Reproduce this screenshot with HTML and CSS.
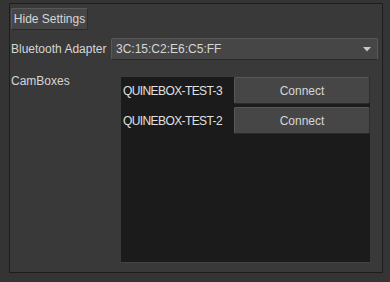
FILE: index.html
```html
<!DOCTYPE html>
<html lang="en">
<head>
    <meta charset="UTF-8">
    <meta name="viewport" content="width=device-width, initial-scale=1.0">
    <title>Settings</title>
    <link rel="stylesheet" href="styles.css">
</head>
<body>
    <div class="panel">
        <button class="btn toggle">Hide Settings</button>

        <div class="row adapter-row">
            <span class="label">Bluetooth Adapter</span>
            <div class="dropdown">
                <span>3C:15:C2:E6:C5:FF</span>
                <svg class="caret" width="8" height="5" viewBox="0 0 8 5">
                    <path d="M0 0 H8 L4 4.5 Z" fill="#c8c8c8"/>
                </svg>
            </div>
        </div>

        <div class="row boxes-row">
            <span class="label boxes-label">CamBoxes</span>
            <div class="box-list">
                <div class="box">
                    <span class="box-name">QUINEBOX-TEST-3</span>
                    <button class="btn connect">Connect</button>
                </div>
                <div class="box">
                    <span class="box-name">QUINEBOX-TEST-2</span>
                    <button class="btn connect">Connect</button>
                </div>
            </div>
        </div>
    </div>
</body>
</html>
```

FILE: styles.css
```css
:root {
    --color-bg: #343434;
    --color-panel: #393939;
    --color-line: #1d1d1d;
    --color-list: #1b1b1b;
    --color-btn: #464646;
    --color-btn-edge: #585858;
    --color-text: #d6d6d6;
}

body {
    margin: 0;
    background-color: var(--color-bg);
    font-family: 'Liberation Sans', Arial, sans-serif;
    font-size: 12px;
    color: var(--color-text);
}

.panel {
    box-sizing: border-box;
    margin: 3px 7px 0 9px;
    height: 270px;
    border: 1px solid var(--color-line);
    background-color: var(--color-panel);
    padding: 4px 0 0 1px;
}

.btn {
    font-family: inherit;
    font-size: 12px;
    color: var(--color-text);
    background-color: var(--color-btn);
    border: 1px solid var(--color-btn-edge);
    border-bottom-color: #2a2a2a;
    border-right-color: #2e2e2e;
    border-radius: 2px;
    cursor: pointer;
}

.toggle {
    display: block;
    width: 77px;
    height: 22px;
    padding: 0;
}

.row {
    display: flex;
}

.adapter-row {
    margin-top: 8px;
    align-items: center;
}

.label {
    width: 100px;
}

.dropdown {
    box-sizing: border-box;
    display: flex;
    align-items: center;
    justify-content: space-between;
    width: 267px;
    height: 22px;
    padding: 0 6px 0 4px;
    background-color: var(--color-btn);
    border: 1px solid var(--color-btn-edge);
    border-bottom-color: #2a2a2a;
    border-radius: 2px;
}

.boxes-row {
    margin-top: 14px;
}

.boxes-label {
    width: 110px;
}

.box-list {
    box-sizing: border-box;
    width: 249px;
    height: 186px;
    margin-top: 3px;
    background-color: var(--color-list);
    border-bottom: 1px solid #444;
    display: flex;
    flex-direction: column;
    gap: 2px;
}

.box {
    display: flex;
    align-items: flex-start;
    height: 28px;
}

.box-name {
    width: 111px;
    padding-left: 2px;
    line-height: 28px;
    letter-spacing: -0.6px;
    color: #e0e0e0;
}

.connect {
    width: 136px;
    height: 27px;
    padding: 0;
}
```
